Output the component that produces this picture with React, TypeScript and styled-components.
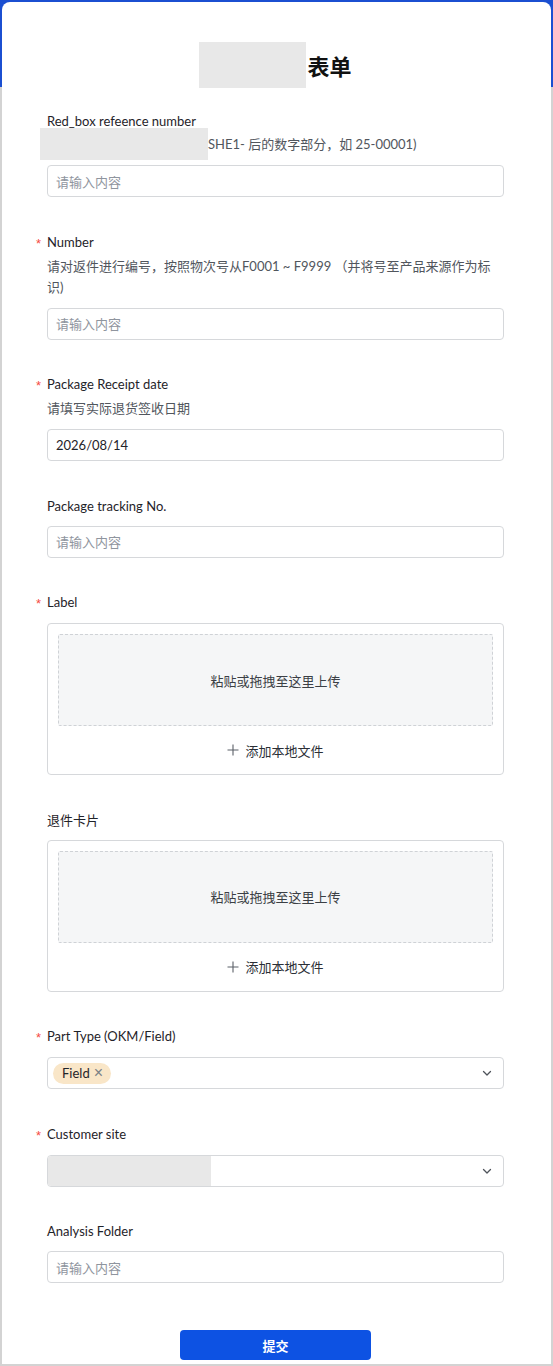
import React from "react";
import styled, { createGlobalStyle } from "styled-components";

const Global = createGlobalStyle`
  html, body { margin: 0; padding: 0; background: #d3d3d3; }
  body { font-family: "Lato", "Noto Sans CJK SC", sans-serif; color: #1f2329; }
  * { box-sizing: border-box; }
`;

const Frame = styled.div`
  background: linear-gradient(to bottom, #1b4fd1 0, #1b4fd1 87px, #d3d3d3 87px);
  padding: 2px 2px 3px 2px;
`;

const Card = styled.div`
  background: #fff;
  border-radius: 8px 8px 0 0;
  padding: 40px 47px 4px 45px;
`;

const TitleRow = styled.div`
  display: flex;
  justify-content: center;
  align-items: center;
  height: 46px;
  margin-bottom: 23px;
`;

const Redacted = styled.span<{ $w: number; $h: number }>`
  display: inline-block;
  width: ${(p) => p.$w}px;
  height: ${(p) => p.$h}px;
  background: #e8e8e8;
  flex: none;
`;

const TitleText = styled.h1`
  margin: 0;
  font-family: "Noto Sans CJK SC", sans-serif;
  font-size: 22px;
  font-weight: 700;
  color: #111;
  padding-left: 1px;
`;

const Form = styled.div`
  display: flex;
  flex-direction: column;
  gap: 34.5px;
`;

const Field = styled.div`
  display: flex;
  flex-direction: column;
`;

const Label = styled.div`
  font-size: 13px;
  line-height: 20px;
  color: #1f2329;
`;

const Star = styled.span`
  display: inline-block;
  width: 11px;
  margin-left: -11px;
  color: #f54a45;
  font-family: "Liberation Sans", sans-serif;
  font-size: 13px;
  position: relative;
  top: 1px;
`;

const Desc = styled.div`
  margin-top: 3px;
  font-size: 13px;
  line-height: 21px;
  color: #51565d;
  display: flex;
  align-items: center;
`;

const DescWrap = styled.div`
  margin-top: 3px;
  font-size: 13px;
  line-height: 21px;
  color: #51565d;
`;

const Input = styled.div<{ $filled?: boolean }>`
  margin-top: 10px;
  height: 32px;
  border: 1px solid #d6d8db;
  border-radius: 4px;
  padding: 0 8px;
  display: flex;
  align-items: center;
  font-size: 13px;
  color: ${(p) => (p.$filled ? "#1f2329" : "#8f959e")};
`;

const Select = styled.div<{ $flush?: boolean }>`
  margin-top: 10px;
  height: 32px;
  border: 1px solid #d6d8db;
  border-radius: 4px;
  padding: 0 10px 0 ${(p) => (p.$flush ? 0 : 5)}px;
  display: flex;
  align-items: center;
  overflow: hidden;
`;

const SelectBody = styled.div`
  flex: 1;
  display: flex;
  align-items: center;
`;

const Tag = styled.span`
  display: inline-flex;
  align-items: center;
  gap: 4px;
  height: 21px;
  padding: 0 8px 0 9px;
  border-radius: 11px;
  background: #f9e6c8;
  font-size: 13px;
  color: #1f2329;
`;

const TagClose = styled.span`
  color: #7a7f86;
  font-family: "Liberation Sans", sans-serif;
  font-size: 16px;
  line-height: 1;
`;

const Upload = styled.div`
  margin-top: 10px;
  height: 152px;
  border: 1px solid #d6d8db;
  border-radius: 4px;
  padding: 10px 10px 0;
  display: flex;
  flex-direction: column;
`;

const Drop = styled.div`
  height: 92px;
  border: 1px dashed #cfd2d6;
  border-radius: 2px;
  background: #f5f6f7;
  display: flex;
  align-items: center;
  justify-content: center;
  font-size: 13px;
  color: #3b3f45;
`;

const AddLocal = styled.div`
  flex: 1;
  display: flex;
  align-items: center;
  justify-content: center;
  gap: 6px;
  font-size: 13px;
  color: #2b2f36;
`;

const Footer = styled.div`
  display: flex;
  justify-content: center;
  margin-top: 47px;
`;

const Submit = styled.button`
  width: 191px;
  height: 30px;
  border: none;
  border-radius: 4px;
  background: #0d52e3;
  color: #fff;
  font-family: "Noto Sans CJK SC", sans-serif;
  font-size: 13px;
  font-weight: 700;
`;

const Chevron = () => (
  <svg width="12" height="12" viewBox="0 0 12 12" fill="none">
    <polyline points="2.5,4.5 6,8 9.5,4.5" stroke="#4e535a" strokeWidth="1.3" strokeLinecap="round" strokeLinejoin="round" />
  </svg>
);

const Plus = () => (
  <svg width="12" height="12" viewBox="0 0 12 12" fill="none">
    <path d="M6 0.5 V11.5 M0.5 6 H11.5" stroke="#5b6068" strokeWidth="1.1" />
  </svg>
);

const UploadBox = () => (
  <Upload>
    <Drop>粘贴或拖拽至这里上传</Drop>
    <AddLocal>
      <Plus />
      添加本地文件
    </AddLocal>
  </Upload>
);

export default function App() {
  return (
    <>
      <Global />
      <Frame>
        <Card>
          <TitleRow>
            <Redacted $w={107} $h={46} />
            <TitleText>表单</TitleText>
          </TitleRow>
          <Form>
            <Field>
              <Label>Red_box refeence number</Label>
              <Desc>
                <Redacted $w={168} $h={32} style={{ marginLeft: -7, marginTop: -6, marginBottom: -5 }} />
                SHE1- 后的数字部分，如 25-00001)
              </Desc>
              <Input>请输入内容</Input>
            </Field>
            <Field>
              <Label>
                <Star>*</Star>Number
              </Label>
              <DescWrap>
                请对返件进行编号，按照物次号从F0001 ~ F9999 （并将号至产品来源作为标
                <br />
                识)
              </DescWrap>
              <Input>请输入内容</Input>
            </Field>
            <Field>
              <Label>
                <Star>*</Star>Package Receipt date
              </Label>
              <DescWrap>请填写实际退货签收日期</DescWrap>
              <Input $filled>2026/08/14</Input>
            </Field>
            <Field>
              <Label>Package tracking No.</Label>
              <Input>请输入内容</Input>
            </Field>
            <Field>
              <Label>
                <Star>*</Star>Label
              </Label>
              <UploadBox />
            </Field>
            <Field>
              <Label>退件卡片</Label>
              <UploadBox />
            </Field>
            <Field>
              <Label>
                <Star>*</Star>Part Type (OKM/Field)
              </Label>
              <Select>
                <SelectBody>
                  <Tag>
                    Field<TagClose>×</TagClose>
                  </Tag>
                </SelectBody>
                <Chevron />
              </Select>
            </Field>
            <Field>
              <Label>
                <Star>*</Star>Customer site
              </Label>
              <Select $flush>
                <SelectBody>
                  <Redacted $w={163} $h={30} />
                </SelectBody>
                <Chevron />
              </Select>
            </Field>
            <Field>
              <Label>Analysis Folder</Label>
              <Input>请输入内容</Input>
            </Field>
          </Form>
          <Footer>
            <Submit>提交</Submit>
          </Footer>
        </Card>
      </Frame>
    </>
  );
}
